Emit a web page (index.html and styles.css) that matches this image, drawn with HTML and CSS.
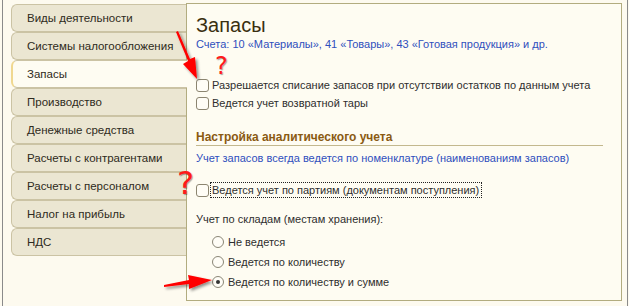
FILE: index.html
```html
<!DOCTYPE html>
<html lang="ru">
<head>
<meta charset="utf-8">
<title>Запасы</title>
<link rel="stylesheet" href="styles.css">
</head>
<body>
<div class="window">
  <div class="tabs">
    <div class="tab">Виды деятельности</div>
    <div class="tab">Системы налогообложения</div>
    <div class="tab active">Запасы</div>
    <div class="tab">Производство</div>
    <div class="tab">Денежные средства</div>
    <div class="tab">Расчеты с контрагентами</div>
    <div class="tab">Расчеты с персоналом</div>
    <div class="tab">Налог на прибыль</div>
    <div class="tab">НДС</div>
  </div>
  <div class="panel">
    <h1 class="title">Запасы</h1>
    <div class="accounts">Счета: 10 «Материалы», 41 «Товары», 43 «Готовая продукция» и др.</div>
    <div class="checks">
      <div class="check"><span class="box"></span><span class="lbl">Разрешается списание запасов при отсутствии остатков по данным учета</span></div>
      <div class="check"><span class="box"></span><span class="lbl">Ведется учет возвратной тары</span></div>
    </div>
    <div class="section">Настройка аналитического учета</div>
    <div class="note">Учет запасов всегда ведется по номенклатуре (наименованиям запасов)</div>
    <div class="check batch"><span class="box"></span><span class="lbl focus">Ведется учет по партиям (документам поступления)</span></div>
    <div class="label">Учет по складам (местам хранения):</div>
    <div class="radios">
      <div class="radio"><span class="circle"></span><span class="lbl">Не ведется</span></div>
      <div class="radio"><span class="circle"></span><span class="lbl">Ведется по количеству</span></div>
      <div class="radio"><span class="circle on"></span><span class="lbl">Ведется по количеству и сумме</span></div>
    </div>
  </div>
  <svg class="annot" width="629" height="306" viewBox="0 0 629 306">
    <defs>
      <filter id="sh" x="-50%" y="-50%" width="200%" height="200%">
        <feGaussianBlur in="SourceAlpha" stdDeviation="1.5"/>
        <feOffset dx="2" dy="2" result="b"/>
        <feComponentTransfer><feFuncA type="linear" slope="0.45"/></feComponentTransfer>
        <feMerge><feMergeNode/><feMergeNode in="SourceGraphic"/></feMerge>
      </filter>
    </defs>
    <g fill="#ff0000" filter="url(#sh)">
      <polygon points="175,32 177,31 189,59 194,57 196,79 182,64 187,61"/>
      <polygon points="163,287 163,285 188,280 187,275 211,280 188,289 188,284"/>
    </g>
  </svg>
  <span class="qm qm1">?</span>
  <span class="qm qm2">?</span>
</div>
</body>
</html>
```
FILE: styles.css
```css
* { box-sizing: border-box; }
html, body { margin: 0; padding: 0; }
body {
  background: #fdfaef;
  font-family: "Liberation Sans", Arial, sans-serif;
  font-size: 11px;
  color: #2e2e2e;
}
.window {
  position: relative;
  margin-left: 2px;
  width: 626px;
  height: 306px;
  border-left: 1px solid #8a8a8a;
  border-right: 1px solid #8a8a8a;
  display: flex;
  align-items: flex-start;
  padding: 3px 0 0 8px;
}
.tabs {
  width: 175px;
  flex: none;
  padding-top: 1px;
  display: flex;
  flex-direction: column;
  position: relative;
  z-index: 2;
}
.tab {
  height: 28px;
  display: flex;
  align-items: center;
  padding-left: 15px;
  padding-bottom: 1px;
  background: #ebe6d2;
  border: 1px solid #cbc3a4;
  border-right: none;
  border-radius: 6px 0 0 6px;
  font-size: 11.5px;
  color: #2e2a20;
}
.tab.active {
  background: #fefcf2;
  border-left: 2px solid #f0d890;
  padding-left: 14px;
  margin-right: -1px;
}
.panel {
  width: 436px;
  height: 298px;
  flex: none;
  background: #fefcf2;
  border: 1px solid #b2ac7f;
  padding: 9px 18px 0 9px;
}
.title {
  margin: 0;
  font-size: 20px;
  line-height: 24px;
  font-weight: normal;
  color: #3a2f10;
}
.accounts, .note {
  line-height: 14px;
  color: #2f4fbd;
}
.checks { margin-top: 25px; }
.check {
  height: 18px;
  display: flex;
  align-items: center;
}
.box {
  width: 13px;
  height: 13px;
  border: 1px solid #8c8570;
  border-radius: 3px;
  background: #fffdf6;
  margin-right: 3px;
  flex: none;
}
.section {
  margin-top: 18px;
  font-size: 12px;
  line-height: 15px;
  font-weight: bold;
  color: #8a5a12;
  border-bottom: 1px solid #c3b88e;
}
.note { margin-top: 5px; }
.batch { margin-top: 16px; }
.focus {
  outline: 1px dotted #222;
  outline-offset: 1px;
  padding-right: 1px;
}
.label {
  margin-top: 13px;
  line-height: 14px;
}
.radios {
  margin-top: 6px;
  padding-left: 16px;
}
.radio {
  height: 20px;
  display: flex;
  align-items: center;
}
.circle {
  width: 12px;
  height: 12px;
  border: 1px solid #8a8676;
  border-radius: 50%;
  background: #fffdf6;
  margin-right: 4px;
  flex: none;
  display: flex;
  align-items: center;
  justify-content: center;
}
.circle.on::after {
  content: "";
  width: 4px;
  height: 4px;
  border-radius: 50%;
  background: #333;
}
.annot {
  position: absolute;
  left: -2px;
  top: 0;
  pointer-events: none;
  z-index: 5;
}
.qm {
  position: absolute;
  z-index: 5;
  color: #ff1a1a;
  font-family: "DejaVu Sans", sans-serif;
  text-shadow: 1px 1px 1px rgba(0,0,0,0.35);
  line-height: 1;
}
.qm1 { left: 212px; top: 54px; font-size: 24px; }
.qm2 { left: 174px; top: 167px; font-size: 32px; }
```
